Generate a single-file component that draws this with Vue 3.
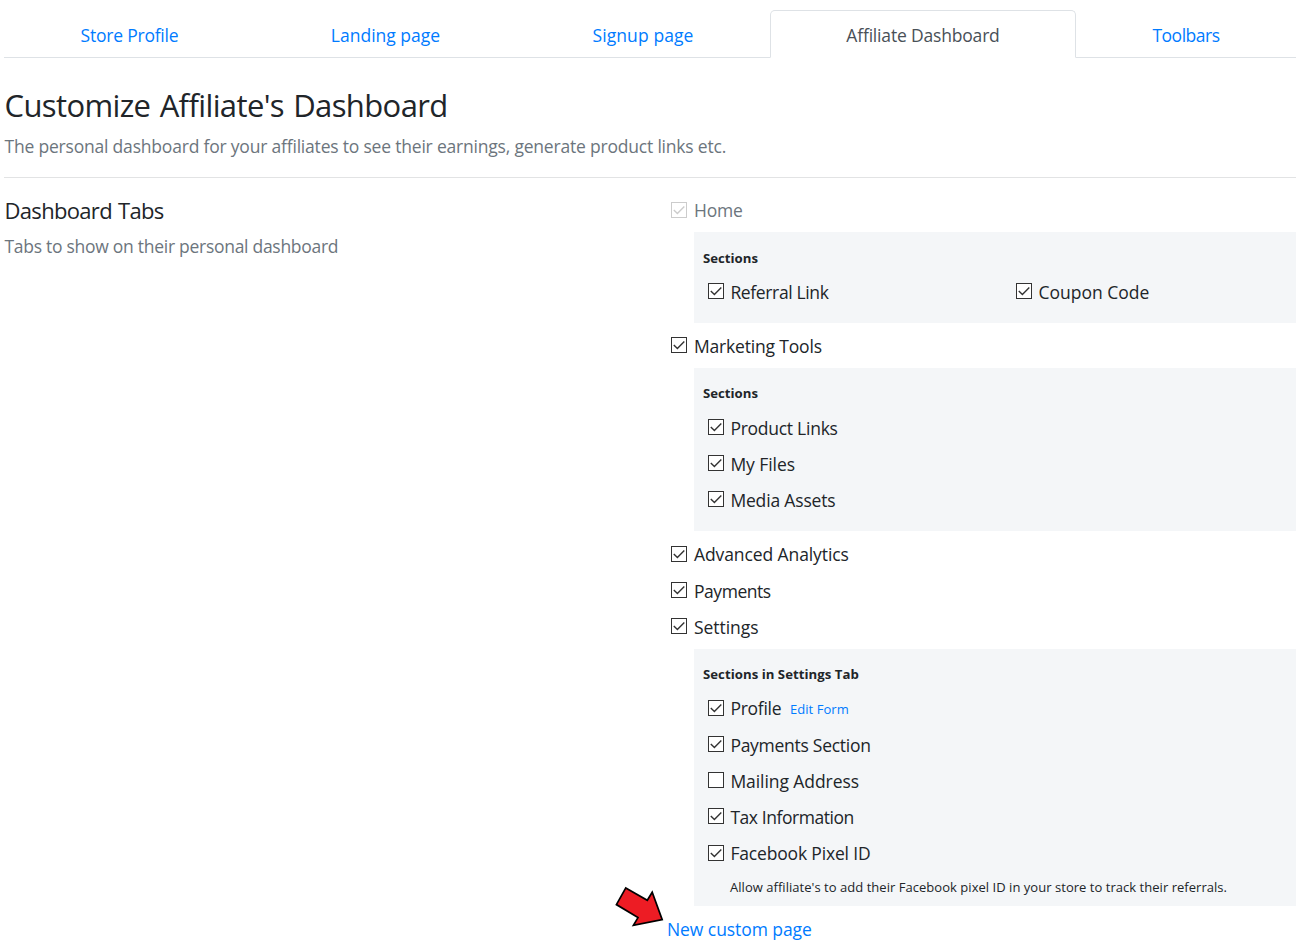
<script setup>
import { h } from 'vue'

// `track` is the letter spacing of a label in px, `high` lifts its baseline by one pixel.
const tabs = [
  { name: 'Store Profile', key: 'store', track: -0.22 },
  { name: 'Landing page', key: 'landing', track: 0 },
  { name: 'Signup page', key: 'signup', track: 0.1 },
  { name: 'Affiliate Dashboard', key: 'dashboard', track: -0.18, active: true },
  { name: 'Toolbars', key: 'toolbars', track: -0.48 },
]

const entries = [
  {
    name: 'Home', disabled: true, on: true, high: true, track: -0.2, key: 'home', title: 'Sections', grid: true,
    sections: [
      { name: 'Referral Link', on: true, track: -0.36 },
      { name: 'Coupon Code', on: true, track: 0 },
    ],
  },
  {
    name: 'Marketing Tools', on: true, track: -0.18, key: 'marketing', title: 'Sections',
    sections: [
      { name: 'Product Links', on: true, track: -0.26 },
      { name: 'My Files', on: true, track: -0.06 },
      { name: 'Media Assets', on: true, track: -0.17 },
    ],
  },
  { name: 'Advanced Analytics', on: true, high: true, track: -0.1, key: 'analytics' },
  { name: 'Payments', on: true, track: -0.46, key: 'payments' },
  {
    name: 'Settings', on: true, track: -0.05, key: 'settings', title: 'Sections in Settings Tab',
    sections: [
      { name: 'Profile', on: true, high: true, track: -0.26, link: 'Edit Form' },
      { name: 'Payments Section', on: true, track: -0.27 },
      { name: 'Mailing Address', on: false, track: -0.07 },
      { name: 'Tax Information', on: true, track: -0.44 },
      { name: 'Facebook Pixel ID', on: true, high: true, track: -0.17, note: "Allow affiliate's to add their Facebook pixel ID in your store to track their referrals." },
    ],
  },
]

const spacing = (item) => ({ letterSpacing: item.track + 'px' })

const CheckBox = (props) =>
  h('svg', { width: 16, height: 16, viewBox: '0 0 16 16', role: 'checkbox', 'aria-checked': props.on }, [
    h('rect', { x: 0.5, y: 0.5, width: 15, height: 15, fill: '#fff', stroke: props.disabled ? '#ccc' : '#333' }),
    props.on
      ? h('path', { d: 'M2.8 7.9 6.4 11.5 13.3 4.6', fill: 'none', stroke: props.disabled ? '#ccc' : '#333', 'stroke-width': 1.4 })
      : null,
  ])
CheckBox.props = { on: Boolean, disabled: Boolean }
</script>

<template>
  <div class="page">
    <nav class="tabs">
      <a v-for="t in tabs" :key="t.key" class="tab" :class="{ active: t.active }"><span :style="spacing(t)">{{ t.name }}</span></a>
    </nav>
    <header class="intro">
      <h1>Customize Affiliate's Dashboard</h1>
      <p>The personal dashboard for your affiliates to see their earnings, generate product links etc.</p>
    </header>
    <main class="content">
      <section class="about">
        <h2>Dashboard Tabs</h2>
        <p>Tabs to show on their personal dashboard</p>
      </section>
      <section class="options">
        <div v-for="e in entries" :key="e.key" class="entry" :class="e.key">
          <div class="row" :class="{ disabled: e.disabled }">
            <CheckBox class="box" :on="e.on" :disabled="e.disabled" />
            <span class="label" :class="{ high: e.high }" :style="spacing(e)">{{ e.name }}</span>
          </div>
          <div v-if="e.sections" class="panel">
            <h3>{{ e.title }}</h3>
            <div :class="{ halves: e.grid }">
              <div v-for="s in e.sections" :key="s.name">
                <div class="row" :class="{ noted: s.note }">
                  <CheckBox class="box" :on="s.on" />
                  <span class="label" :class="{ high: s.high }" :style="spacing(s)">{{ s.name }}</span>
                  <a v-if="s.link" class="edit">{{ s.link }}</a>
                </div>
                <p v-if="s.note" class="note">{{ s.note }}</p>
              </div>
            </div>
          </div>
        </div>
        <div class="new-page">
          <a>New custom page</a>
          <svg class="arrow" width="50" height="42" viewBox="614 885 50 42">
            <path d="M625.8 887.9 647.3 900.3 652.2 892.2 662.2 919.7 633.4 925.4 638 917.6 616.4 904.6Z" fill="#ed1c24" stroke="#000" stroke-width="1.7" />
          </svg>
        </div>
      </section>
    </main>
  </div>
</template>

<style>
body { background: #fff; }
</style>

<style scoped>
.page {
  box-sizing: border-box;
  width: 1300px;
  height: 948px;
  padding: 10px 4px 0;
  overflow: hidden;
  font-family: "Open Sans", "Noto Sans", sans-serif;
  font-size: 17.5px;
  color: #212529;
  white-space: nowrap;
}
h1, h2, h3, p { margin: 0; font-weight: 400; }
.tabs {
  display: grid;
  grid-template-columns: 251px 261px 254px 306px 220px;
  grid-template-rows: 48px;
  height: 48px;
}
.tab {
  box-sizing: border-box;
  border-bottom: 1px solid #dee2e6;
  padding-top: 3px;
  line-height: 44px;
  text-align: center;
  color: #007bff;
}
.tab.active {
  border: 1px solid #dee2e6;
  border-bottom-color: transparent;
  border-radius: 5px 5px 0 0;
  padding-top: 2px;
  color: #495057;
}
.intro { height: 119px; border-bottom: 1px solid #e2e3e4; }
.intro h1 { padding-top: 25px; font-size: 31px; line-height: 44px; letter-spacing: -0.62px; word-spacing: 1.8px; }
.intro p { padding-top: 5px; line-height: 28px; letter-spacing: -0.2px; color: #6c757d; }
.intro h1, .intro p, .about { padding-left: 0.5px; }
.content { display: grid; grid-template-columns: 663px 629px; padding-top: 15px; }
.about h2 { font-size: 22px; line-height: 34px; letter-spacing: -0.68px; word-spacing: 1px; }
.about p { padding-top: 2px; line-height: 34px; letter-spacing: -0.28px; color: #6c757d; }
.row { display: flex; align-items: center; height: 36px; padding-left: 4px; }
.row.disabled { color: #6c757d; }
.box { flex: none; margin: 0 7px 2px 0; }
.label { line-height: 34px; }
.label.high { padding-bottom: 2px; }
.panel { margin: 4px 0 6px 27px; padding: 16px 0 13px 9px; background: #f4f6f8; }
.panel h3 { height: 26px; font-size: 13.2px; line-height: 18px; font-weight: 700; }
.panel .row { padding-left: 5px; }
.panel .box { margin-right: 6.4px; }
.halves { display: grid; grid-template-columns: 308px 1fr; }
.home .panel { margin: 3px 0 5px 27px; }
.home .panel h3 { height: 25px; padding-top: 1px; }
.settings .panel { margin-bottom: 0; padding-bottom: 8px; }
.settings .panel h3 { letter-spacing: 0.03px; }
.panel .noted { margin-top: 1px; }
.edit { margin-left: 8.6px; font-size: 13px; letter-spacing: 0.05px; color: #007bff; }
.note { height: 26px; padding-left: 27px; font-size: 13px; line-height: 30px; letter-spacing: 0.035px; }
.new-page { position: relative; color: #007bff; line-height: 46px; letter-spacing: -0.07px; }
.arrow { position: absolute; left: -53px; top: -21px; }
</style>
